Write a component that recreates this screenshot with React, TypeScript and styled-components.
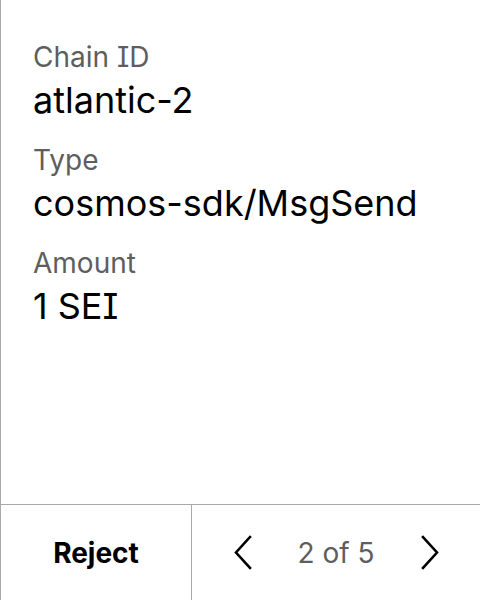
import React from "react";
import styled, { createGlobalStyle } from "styled-components";

const Global = createGlobalStyle`
  html, body { margin: 0; padding: 0; background: #fff; }
  body { font-family: Inter, "Noto Sans", sans-serif; font-feature-settings: "cv08" 1; }
  * { box-sizing: border-box; }
`;

const Screen = styled.div`
  height: 600px;
  width: 480px;
  display: flex;
  flex-direction: column;
  border-left: 1px solid #a9a9a9;
  background: #fff;
`;

const Details = styled.div`
  flex: 1;
  display: flex;
  flex-direction: column;
  gap: 21px;
  padding: 40px 32px 0 32px;
`;

const Field = styled.div`
  display: flex;
  flex-direction: column;
  gap: 4px;
`;

const Label = styled.div`
  font-size: 28px;
  line-height: 34px;
  color: #5e5e5e;
`;

const Value = styled.div`
  font-size: 36px;
  line-height: 44px;
  color: #000;
`;

const Footer = styled.div`
  height: 96px;
  border-top: 1px solid #a9a9a9;
  display: grid;
  grid-template-columns: 191px 1fr;
`;

const RejectButton = styled.button`
  border: none;
  border-right: 1px solid #a9a9a9;
  background: transparent;
  font-family: inherit;
  font-feature-settings: inherit;
  font-size: 28px;
  font-weight: 700;
  color: #000;
  padding: 0;
`;

const Pager = styled.div`
  display: flex;
  align-items: center;
  justify-content: center;
`;

const Arrow = styled.button`
  border: none;
  background: transparent;
  padding: 0;
  width: 18px;
  height: 36px;
  display: flex;
  align-items: center;
  justify-content: center;
`;

const PageText = styled.span`
  font-size: 28px;
  color: #5e5e5e;
  width: 169px;
  text-align: center;
`;

const Chevron = ({ dir }: { dir: "left" | "right" }) => (
  <svg width="18" height="36" viewBox="0 0 18 36" fill="none">
    <path
      d={dir === "left" ? "M16 2 L2 17.5 L16 33" : "M2 2 L16 17.5 L2 33"}
      stroke="#000"
      strokeWidth="2.6"
      strokeLinecap="square"
      strokeLinejoin="miter"
    />
  </svg>
);

export default function App() {
  const fields = [
    { label: "Chain ID", value: "atlantic-2" },
    { label: "Type", value: "cosmos-sdk/MsgSend" },
    { label: "Amount", value: "1 SEI" },
  ];
  return (
    <>
      <Global />
      <Screen>
        <Details>
          {fields.map((f) => (
            <Field key={f.label}>
              <Label>{f.label}</Label>
              <Value>{f.value}</Value>
            </Field>
          ))}
        </Details>
        <Footer>
          <RejectButton>Reject</RejectButton>
          <Pager>
            <Arrow>
              <Chevron dir="left" />
            </Arrow>
            <PageText>2 of 5</PageText>
            <Arrow>
              <Chevron dir="right" />
            </Arrow>
          </Pager>
        </Footer>
      </Screen>
    </>
  );
}
